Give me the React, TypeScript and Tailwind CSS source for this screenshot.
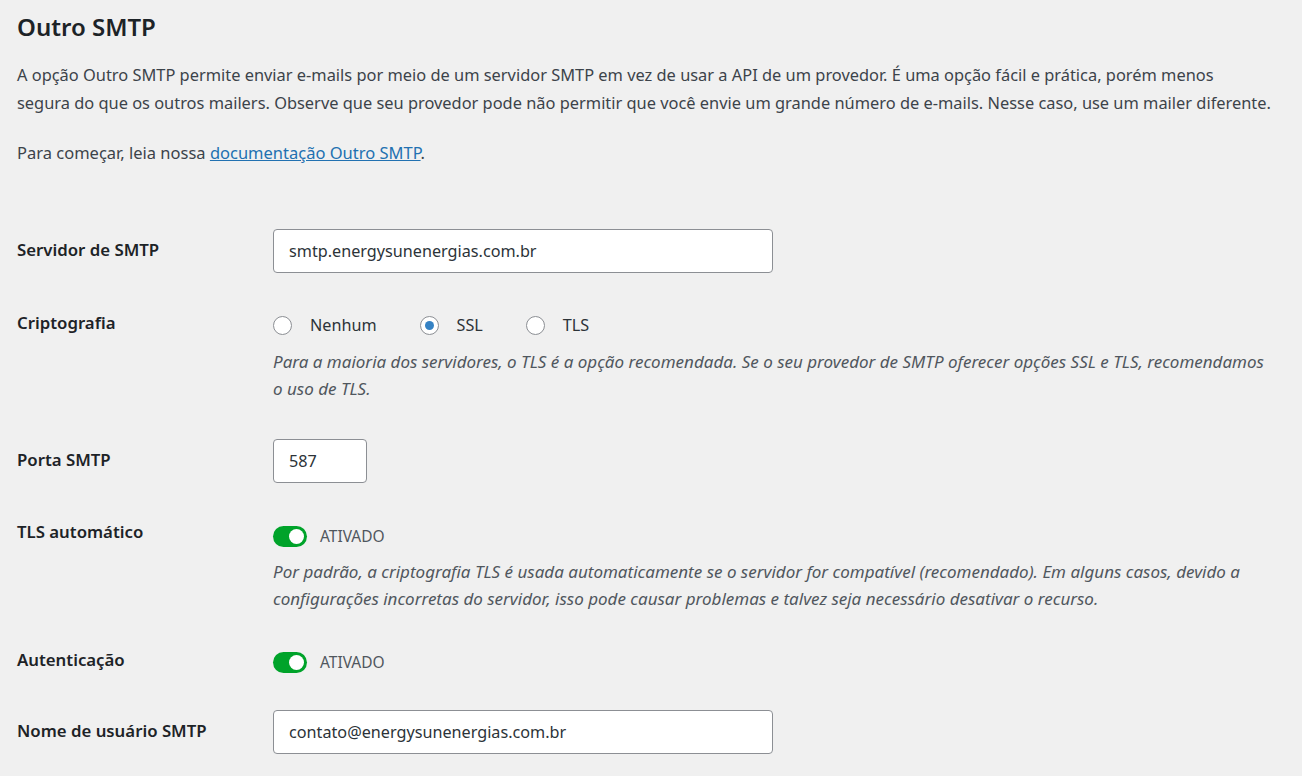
import React from "react"

const font = "font-['Segoe_UI','Noto_Sans','Open_Sans',sans-serif]"

const Label = ({ children, className }: { children: React.ReactNode, className?: string }) => (
  <div className={`text-[16.8px] leading-[24px] font-semibold text-[#1d2327] ${className ?? ""}`}>{children}</div>
)

const TextInput = ({ value, className }: { value: string, className?: string }) => (
  <div className={`h-[44px] bg-white border border-[#8c8f94] rounded-[4px] px-[15px] flex items-center text-[16.2px] text-[#2c3338] ${className ?? ""}`}>
    {value}
  </div>
)

const Radio = ({ label, checked }: { label: string, checked?: boolean }) => (
  <div className="flex items-center">
    <span className="w-[19px] h-[19px] rounded-full bg-white border border-[#8c8f94] flex items-center justify-center">
      {checked && <span className="w-[9px] h-[9px] rounded-full bg-[#3582c4]" />}
    </span>
    <span className="ml-[18px] text-[16.2px] text-[#2c3338]">{label}</span>
  </div>
)

const Toggle = () => (
  <div className="flex items-center leading-[24px]">
    <span className="w-[34px] h-[21px] rounded-full bg-[#00a32a] flex items-center justify-end pr-[3px]">
      <span className="w-[15px] h-[15px] rounded-full bg-white" />
    </span>
    <span className="ml-[13px] text-[15.5px] text-[#50575e]">ATIVADO</span>
  </div>
)

const Desc = ({ children, className }: { children: React.ReactNode, className?: string }) => (
  <p className={`max-w-[1000px] italic text-[17px] leading-[27px] text-[#50575e] ${className ?? ""}`}>{children}</p>
)

export default function App() {
  return (
    <div className={`min-h-[776px] bg-[#f0f0f0] pl-[17px] pr-[20px] ${font}`}>
      <h2 className="pt-3 text-[24px] leading-[30px] font-semibold text-[#1d2327]">Outro SMTP</h2>
      <p className="mt-[19px] text-[16.4px] leading-[28px] text-[#3c434a] whitespace-nowrap">
        A opção Outro SMTP permite enviar e-mails por meio de um servidor SMTP em vez de usar a API de um provedor. É uma opção fácil e prática, porém menos
        <br />
        segura do que os outros mailers. Observe que seu provedor pode não permitir que você envie um grande número de e-mails. Nesse caso, use um mailer diferente.
      </p>
      <p className="mt-[22px] text-[16.5px] leading-[28px] text-[#3c434a]">
        Para começar, leia nossa <a className="text-[#2271b1] underline">documentação Outro SMTP</a>.
      </p>

      <div className="mt-[62px] grid grid-cols-[256px_1fr]">
        <Label className="pt-[9px]">Servidor de SMTP</Label>
        <TextInput value="smtp.energysunenergias.com.br" className="w-[500px]" />
      </div>

      <div className="mt-[38px] grid grid-cols-[256px_1fr]">
        <Label>Criptografia</Label>
        <div>
          <div className="flex items-center gap-[43px] pt-[2px] h-[26px]">
            <Radio label="Nenhum" />
            <Radio label="SSL" checked />
            <Radio label="TLS" />
          </div>
          <Desc className="mt-[11px]">
            Para a maioria dos servidores, o TLS é a opção recomendada. Se o seu provedor de SMTP oferecer opções SSL e TLS, recomendamos o uso de TLS.
          </Desc>
        </div>
      </div>

      <div className="mt-[37px] grid grid-cols-[256px_1fr]">
        <Label className="pt-[9px]">Porta SMTP</Label>
        <TextInput value="587" className="w-[94px]" />
      </div>

      <div className="mt-[37px] grid grid-cols-[256px_1fr]">
        <Label>TLS automático</Label>
        <div>
          <div className="pt-[4px]"><Toggle /></div>
          <Desc className="mt-[10px]">
            Por padrão, a criptografia TLS é usada automaticamente se o servidor for compatível (recomendado). Em alguns casos, devido a configurações incorretas do servidor, isso pode causar problemas e talvez seja necessário desativar o recurso.
          </Desc>
        </div>
      </div>

      <div className="mt-[36px] grid grid-cols-[256px_1fr]">
        <Label>Autenticação</Label>
        <div className="pt-[2px]"><Toggle /></div>
      </div>

      <div className="mt-[36px] grid grid-cols-[256px_1fr] pb-6">
        <Label className="pt-[9px]">Nome de usuário SMTP</Label>
        <TextInput value="contato@energysunenergias.com.br" className="w-[500px] h-[43px]" />
      </div>
    </div>
  )
}
